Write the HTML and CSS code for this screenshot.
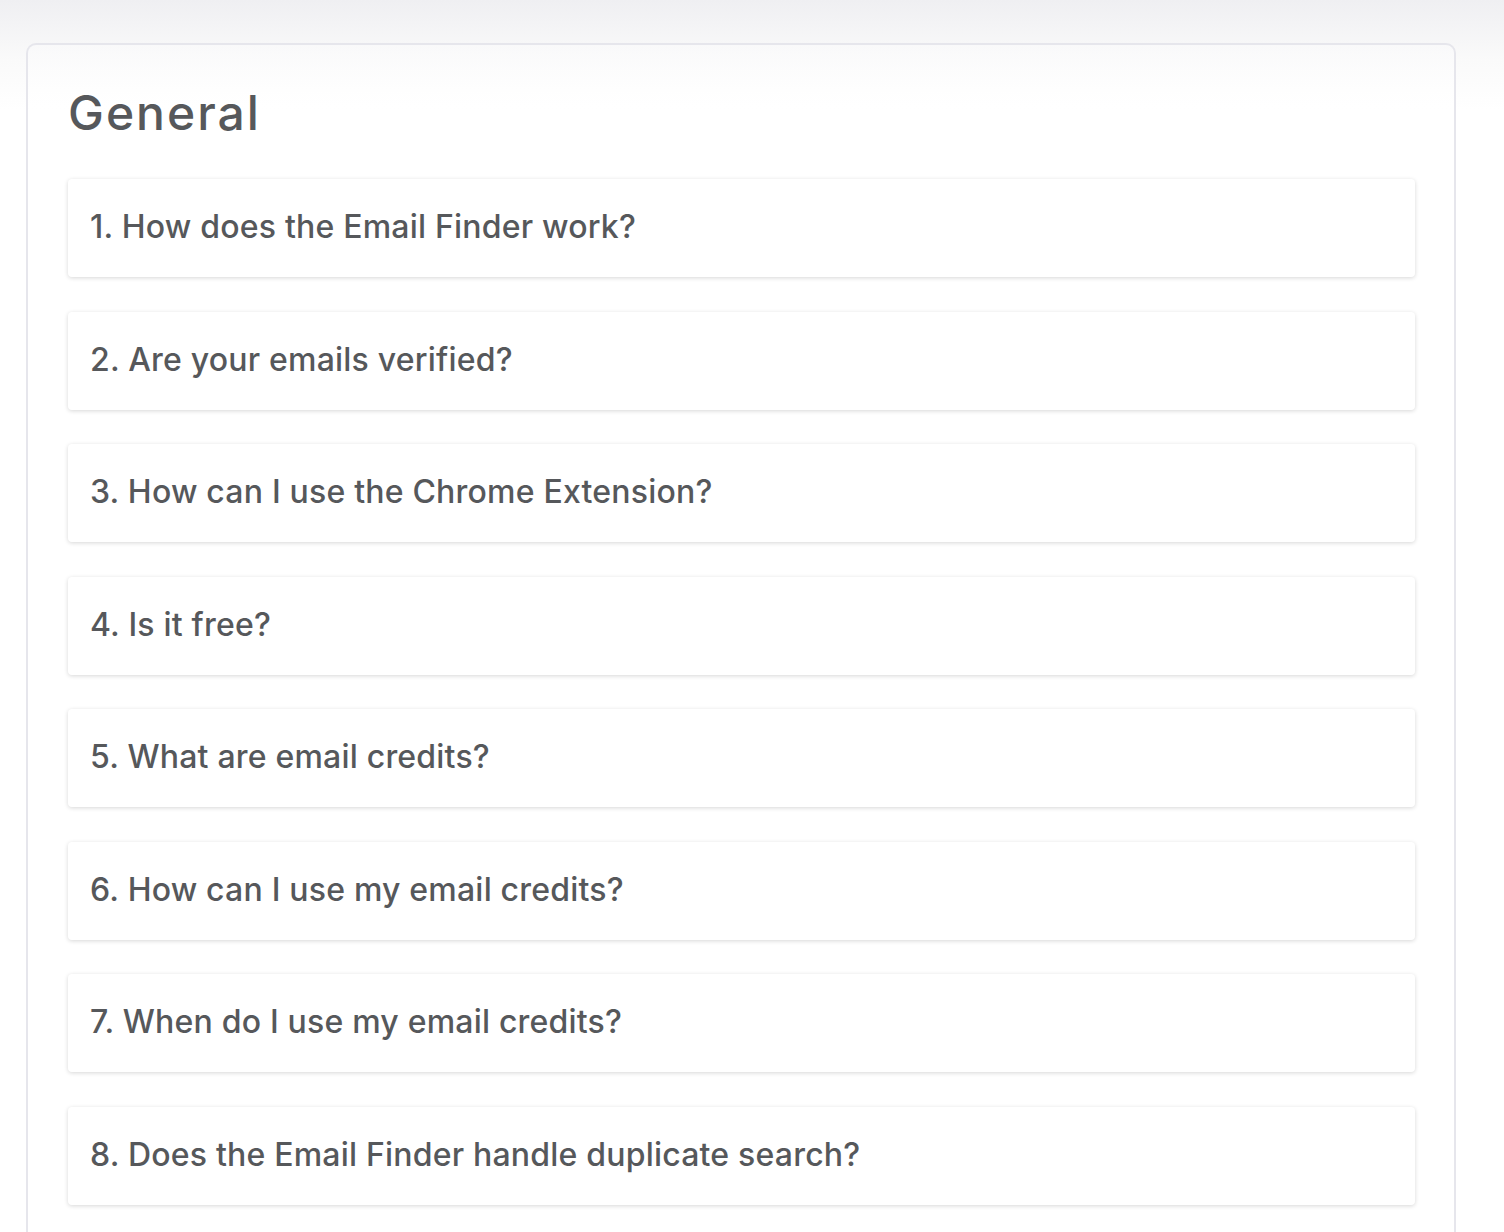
FILE: index.html
```html
<!DOCTYPE html>
<html lang="en">
<head>
<meta charset="utf-8">
<title>FAQ - General</title>
<link rel="stylesheet" href="styles.css">
</head>
<body>
<main class="page">
  <section class="faq-card">
    <h2 class="faq-title">General</h2>
    <div class="faq-list">
      <div class="faq-item">1. How does the Email Finder work?</div>
      <div class="faq-item">2. Are your emails verified?</div>
      <div class="faq-item">3. How can I use the Chrome Extension?</div>
      <div class="faq-item">4. Is it free?</div>
      <div class="faq-item">5. What are email credits?</div>
      <div class="faq-item">6. How can I use my email credits?</div>
      <div class="faq-item">7. When do I use my email credits?</div>
      <div class="faq-item">8. Does the Email Finder handle duplicate search?</div>
    </div>
  </section>
</main>
</body>
</html>
```
FILE: styles.css
```css
html, body {
  margin: 0;
  padding: 0;
}
body {
  background: linear-gradient(#efeff2 0px, #fafafa 60px, #ffffff 110px, #ffffff 100%);
  font-family: Inter, "Noto Sans", sans-serif;
  color: #55575b;
  min-height: 1232px;
}
.page {
  padding: 43px 48px 0 26px;
}
.faq-card {
  border: 2px solid #e6e6ec;
  border-bottom: none;
  border-radius: 10px 10px 0 0;
  padding: 40px 39px 60px 40px;
  background: linear-gradient(rgba(250,250,251,0.6), rgba(255,255,255,0.9) 60px, #fff 100%);
}
.faq-title {
  margin: 0 0 38px 0;
  font-size: 48px;
  line-height: 56px;
  font-weight: 500;
  letter-spacing: 2px;
  color: #56585b;
}
.faq-list {
  display: flex;
  flex-direction: column;
  gap: 34.5px;
}
.faq-item {
  background: #fff;
  border-radius: 4px;
  box-shadow: 0 1px 4px rgba(0, 0, 0, 0.16);
  height: 98px;
  box-sizing: border-box;
  padding: 0 22px 3px 22px;
  display: flex;
  align-items: center;
  font-size: 32px;
  letter-spacing: 0.2px;
  font-weight: 500;
  color: #56585b;
}
```
